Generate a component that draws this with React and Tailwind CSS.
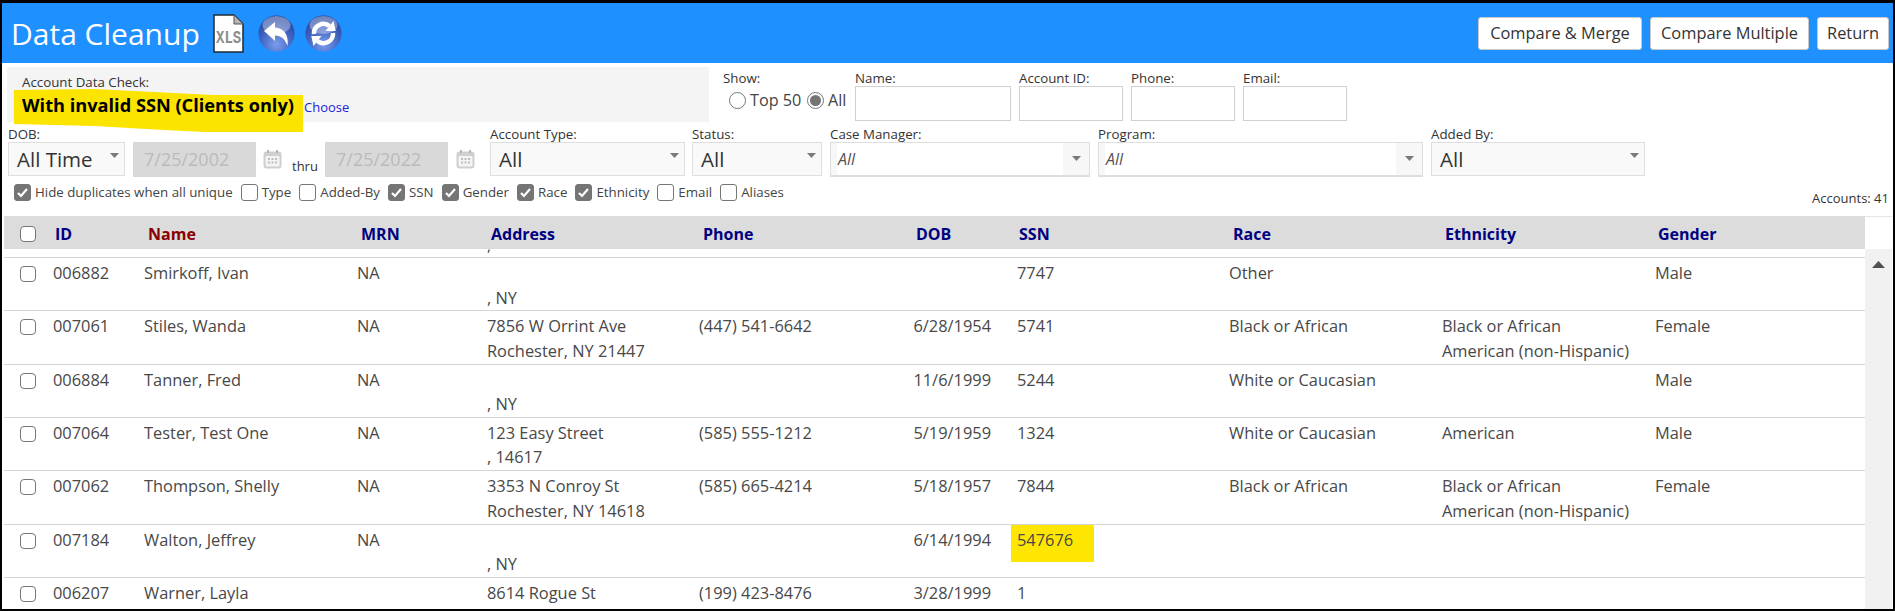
const FONT = "font-['Open_Sans','Noto_Sans',sans-serif]";

const rowGrid = 'grid grid-cols-[49px_91px_213px_130px_212px_200px_112px_218px_213px_213px_1fr]';

const rows = [
  { id: '006882', name: 'Smirkoff, Ivan', mrn: 'NA', addr: ['', ', NY'], ssn: '7747', race: 'Other', gender: 'Male' },
  { id: '007061', name: 'Stiles, Wanda', mrn: 'NA', addr: ['7856 W Orrint Ave', 'Rochester, NY 21447'], phone: '(447) 541-6642', dob: '6/28/1954', ssn: '5741', race: 'Black or African', eth: ['Black or African', 'American (non-Hispanic)'], gender: 'Female' },
  { id: '006884', name: 'Tanner, Fred', mrn: 'NA', addr: ['', ', NY'], dob: '11/6/1999', ssn: '5244', race: 'White or Caucasian', gender: 'Male' },
  { id: '007064', name: 'Tester, Test One', mrn: 'NA', addr: ['123 Easy Street', ', 14617'], phone: '(585) 555-1212', dob: '5/19/1959', ssn: '1324', race: 'White or Caucasian', eth: ['American'], gender: 'Male' },
  { id: '007062', name: 'Thompson, Shelly', mrn: 'NA', addr: ['3353 N Conroy St', 'Rochester, NY 14618'], phone: '(585) 665-4214', dob: '5/18/1957', ssn: '7844', race: 'Black or African', eth: ['Black or African', 'American (non-Hispanic)'], gender: 'Female' },
  { id: '007184', name: 'Walton, Jeffrey', mrn: 'NA', addr: ['', ', NY'], dob: '6/14/1994', ssn: '547676', badSsn: true },
  { id: '006207', name: 'Warner, Layla', addr: ['8614 Rogue St', ''], phone: '(199) 423-8476', dob: '3/28/1999', ssn: '1' },
];

const Check = ({ on, className = '' }) => (
  <span className={`inline-flex items-center justify-center w-[17px] h-[17px] shrink-0 rounded-[3px] border ${on ? 'bg-[#757575] border-[#757575]' : 'bg-white border-[#767676]'} ${className}`}>
    {on && (
      <svg width="13" height="13" viewBox="0 0 13 13">
        <path d="M2 7l3 3 6-7" fill="none" stroke="#fff" strokeWidth="2.2" />
      </svg>
    )}
  </span>
);

const Radio = ({ on }) => (
  <span className="inline-flex items-center justify-center w-[17px] h-[17px] shrink-0 rounded-full border border-[#767676] bg-white">
    {on && <span className="w-[11px] h-[11px] rounded-full bg-[#757575]" />}
  </span>
);

const Arrow = () => (
  <svg width="9" height="5" viewBox="0 0 9 5">
    <path d="M0 0h9L4.500 5z" fill="#7a7a7a" />
  </svg>
);

const Field = ({ label, className = '', children }) => (
  <div className={`flex flex-col ${className}`}>
    <span className="text-[13.300px] leading-[16px] h-[16px] text-[#333] whitespace-nowrap">{label}</span>
    {children}
  </div>
);

const Select = ({ value }) => (
  <div className="h-[34px] flex items-center justify-between border border-[#dedede] bg-[#f9f9f9] pl-[8px] pr-[5px]">
    <span className="text-[20.500px] text-[#333]">{value}</span>
    <span className="-mt-[7px] flex"><Arrow /></span>
  </div>
);

const Combo = ({ value }) => (
  <div className="h-[35px] flex items-stretch border border-[#dedede] border-b-[2px] bg-white">
    <span className="w-[6px] bg-[#f7f7f7]" />
    <span className="flex-1 flex items-center text-[16px] italic text-[#555] pl-px">{value}</span>
    <span className="w-[26px] bg-[#f7f7f7] flex items-center justify-center pb-[2px]"><Arrow /></span>
  </div>
);

const Calendar = () => (
  <svg width="19" height="19" viewBox="0 0 19 19">
    <rect x="0.5" y="1.5" width="18" height="17" rx="3" fill="#cfcfcf" />
    <rect x="2.5" y="6" width="14" height="10.5" rx="1" fill="#f4f4f4" />
    <rect x="4" y="0" width="2" height="3" fill="#b5b5b5" />
    <rect x="13" y="0" width="2" height="3" fill="#b5b5b5" />
    <path d="M5 8h2v2H5zM8.500 8h2v2h-2zM12 8h2v2h-2zM5 11.500h2v2H5zM8.500 11.500h2v2h-2zM12 11.500h2v2h-2z" fill="#bdbdbd" />
  </svg>
);

const DateBox = ({ value }) => (
  <div className="h-[35px] w-[123px] bg-[#d9d9d9] flex items-center pl-[11px] text-[18px] text-[#bdb9b9]">{value}</div>
);

const Sphere = ({ id, children }) => (
  <svg width="37" height="37" viewBox="0 0 37 37">
    <defs>
      <radialGradient id={id} cx="50%" cy="80%" r="75%">
        <stop offset="0%" stopColor="#7c9ded" />
        <stop offset="60%" stopColor="#4063c0" />
        <stop offset="100%" stopColor="#27459b" />
      </radialGradient>
    </defs>
    <circle cx="18.500" cy="18.500" r="18" fill={`url(#${id})`} />
    <ellipse cx="18.500" cy="10" rx="14" ry="9" fill="#fff" opacity="0.35" />
    {children}
  </svg>
);

const SyncArrow = ({ flip }) => (
  <g transform={flip ? 'rotate(180 18.500 18.500)' : undefined}>
    <path d="M9 19A9.500 9.500 0 0 1 24.500 11" fill="none" stroke="#fff" strokeWidth="4.500" />
    <path d="M28.500 5.900L20.500 16.100L30.700 16Z" fill="#fff" />
  </g>
);

const XlsIcon = () => (
  <svg width="31" height="39" viewBox="0 0 31 39">
    <path d="M1 1h20l9 9v28H1z" fill="#fff" stroke="#1f2a33" strokeWidth="1.500" />
    <path d="M21 1v9h9z" fill="#b4b4b4" stroke="#555" strokeWidth="1" />
    <text transform="translate(3 29) scale(1 1.250)" fontSize="14" fontWeight="700" fill="#8c8c8c" fontFamily="Liberation Mono, monospace">XLS</text>
  </svg>
);

const HeaderBtn = ({ children, className = '' }) => (
  <button type="button" className={`h-[33px] bg-white border border-[#c8c8c8] rounded-[3px] text-[16.400px] text-[#333] whitespace-nowrap ${className}`}>
    {children}
  </button>
);

const checks = [
  ['Hide duplicates when all unique', true],
  ['Type', false],
  ['Added-By', false],
  ['SSN', true],
  ['Gender', true],
  ['Race', true],
  ['Ethnicity', true],
  ['Email', false],
  ['Aliases', false],
];

const Lines = ({ lines = [] }) => (
  <div>
    {lines.map((l, i) => (
      <div key={i} className="h-[24.500px] whitespace-nowrap">{l}</div>
    ))}
  </div>
);

const Row = ({ r }) => (
  <div className={`${rowGrid} h-[53.330px] shrink-0 border-b border-[#d5d5d5] text-[16.400px] leading-[24px] text-[#484848]`}>
    <div className="pt-[6px] pl-[16px]"><Check className="rounded-[4px] !w-[16px] !h-[16px]" /></div>
    <div className="pt-[3px]">{r.id}</div>
    <div className="pt-[3px]">{r.name}</div>
    <div className="pt-[3px]">{r.mrn}</div>
    <div className="pt-[3px]"><Lines lines={r.addr} /></div>
    <div className="pt-[3px]">{r.phone}</div>
    <div className="pt-[3px] pr-[20px] text-right">{r.dob}</div>
    {r.badSsn ? (
      <div className="w-[83px] h-[37px] bg-[#ffe600] pt-[3px] pl-[6px]">{r.ssn}</div>
    ) : (
      <div className="pt-[3px] pl-[6px]">{r.ssn}</div>
    )}
    <div className="pt-[3px]">{r.race}</div>
    <div className="pt-[3px]"><Lines lines={r.eth} /></div>
    <div className="pt-[3px]">{r.gender}</div>
  </div>
);

export default function App() {
  return (
    <div className={`${FONT} relative w-[1895px] h-[611px] flex flex-col overflow-hidden bg-white border-2 border-t-[3px] border-black`}>
      {/* blue title bar */}
      <div className="h-[60px] shrink-0 flex items-center justify-between bg-[#1e90ff] pl-[9px] pr-[4px]">
        <div className="flex items-center">
          <span className="w-[202px] text-[30px] text-white whitespace-nowrap">Data Cleanup</span>
          <XlsIcon />
          <span className="ml-[14px] flex">
            <Sphere id="backBall">
              <path d="M6 16 L17 7 V12.500 C26 13 31 20 29.500 31 C27 24 23 20.500 17 20.500 V26 Z" fill="#fff" />
            </Sphere>
          </span>
          <span className="ml-[10px] flex">
            <Sphere id="syncBall">
              <SyncArrow />
              <SyncArrow flip />
            </Sphere>
          </span>
        </div>
        <div className="flex gap-2">
          <HeaderBtn className="w-[164px]">Compare &amp; Merge</HeaderBtn>
          <HeaderBtn className="w-[159px]">Compare Multiple</HeaderBtn>
          <HeaderBtn className="w-[72px]">Return</HeaderBtn>
        </div>
      </div>

      {/* first filter row */}
      <div className="h-[62px] shrink-0 flex pl-[5px] pt-[4px]">
        <div className="relative w-[702px] h-[55px] bg-[#f4f4f4]">
          <svg className="absolute left-[7px] top-[19px]" width="290" height="46" viewBox="0 0 290 46">
            <path d="M0 4 L80 3 L160 7 L200 9 L289 9 V46 L190 46 L150 44 L80 40 L0 38 Z" fill="#fbe400" />
          </svg>
          <div className="absolute left-[15px] top-[7px] text-[13.300px] leading-[16px] text-[#333]">Account Data Check:</div>
          <div className="absolute left-[15px] top-[25px] flex items-baseline whitespace-nowrap">
            <span className="w-[282px] text-[18.200px] font-bold text-black">With invalid SSN (Clients only)</span>
            <span className="text-[13px] text-[#2222dd]">Choose</span>
          </div>
        </div>
        <Field label="Show:" className="ml-[14px] w-[132px] pt-[3px]">
          <div className="flex items-center pl-[6px] pt-[2px] text-[16.200px] text-[#444] whitespace-nowrap">
            <Radio />
            <span className="ml-[4px] w-[57px]">Top 50</span>
            <Radio on />
            <span className="ml-[4px]">All</span>
          </div>
        </Field>
        <div className="flex gap-2 pt-[3px]">
          {[['Name:', 'w-[156px]'], ['Account ID:', 'w-[104px]'], ['Phone:', 'w-[104px]'], ['Email:', 'w-[104px]']].map(([label, w]) => (
            <Field key={label} label={label} className={w}>
              <div className="h-[35px] border border-[#d0d0d0] bg-white" />
            </Field>
          ))}
        </div>
      </div>

      {/* second filter row */}
      <div className="h-[54px] shrink-0 flex pl-[6px] pt-px">
        <Field label="DOB:" className="w-[117px]"><Select value="All Time" /></Field>
        <div className="flex pt-[16px] ml-[8px]">
          <DateBox value="7/25/2002" />
          <span className="ml-[7px] mt-[8px]"><Calendar /></span>
          <span className="ml-[10px] mt-[15px] text-[13px] text-[#333] w-[33px]">thru</span>
          <DateBox value="7/25/2022" />
          <span className="ml-[8px] mt-[8px]"><Calendar /></span>
        </div>
        <Field label="Account Type:" className="ml-[15px] w-[195px]"><Select value="All" /></Field>
        <Field label="Status:" className="ml-[7px] w-[130px]"><Select value="All" /></Field>
        <Field label="Case Manager:" className="ml-[8px] w-[260px]"><Combo value="All" /></Field>
        <Field label="Program:" className="ml-[8px] w-[325px]"><Combo value="All" /></Field>
        <Field label="Added By:" className="ml-[8px] w-[214px]"><Select value="All" /></Field>
      </div>

      {/* options row */}
      <div className="h-[37px] shrink-0 flex justify-between pl-[12px] pr-[4px]">
        <div className="flex items-center gap-[8px] h-[27px] text-[13.300px] text-[#444] whitespace-nowrap">
          {checks.map(([label, on]) => (
            <label key={label} className="flex items-center gap-[4px]">
              <Check on={on} />
              {label}
            </label>
          ))}
        </div>
        <div className="text-[13px] text-[#333] pt-[10px]">Accounts: 41</div>
      </div>

      {/* accounts table */}
      <div className="flex-1 min-h-0 flex pl-[2px] pr-px">
        <div className="flex-1 min-w-0 flex flex-col">
          <div className={`${rowGrid} h-[33px] shrink-0 items-center bg-[#dcdcdc] pt-[3px] text-[16px] font-bold text-[#000080]`}>
            <div className="pl-[16px] flex"><Check className="!w-[16px] !h-[16px] rounded-[4px]" /></div>
            <div className="pl-[2px]">ID</div>
            <div className="pl-[4px] text-[#8b0000]">Name</div>
            <div className="pl-[4px]">MRN</div>
            <div className="pl-[4px]">Address</div>
            <div className="pl-[4px]">Phone</div>
            <div className="pl-[17px]">DOB</div>
            <div className="pl-[8px]">SSN</div>
            <div className="pl-[4px]">Race</div>
            <div className="pl-[3px]">Ethnicity</div>
            <div className="pl-[3px]">Gender</div>
          </div>
          <div className="flex-1 min-h-0 overflow-hidden flex flex-col">
            <div className="h-[9px] shrink-0 border-b border-[#d5d5d5] overflow-hidden pl-[483px] text-[15px] leading-[8px] text-[#484848]">
              <div className="-mt-[8px]">,</div>
            </div>
            {rows.map((r) => <Row key={r.id} r={r} />)}
          </div>
        </div>
        <div className="w-[27px] shrink-0 flex flex-col">
          <div className="h-[33px] shrink-0 border-t border-[#e5e5e5]" />
          <div className="flex-1 bg-[#f1f1f1] flex justify-center pt-[12px]">
            <svg width="13" height="7" viewBox="0 0 13 7">
              <path d="M6.500 0L13 7H0z" fill="#505050" />
            </svg>
          </div>
        </div>
      </div>
    </div>
  );
}
